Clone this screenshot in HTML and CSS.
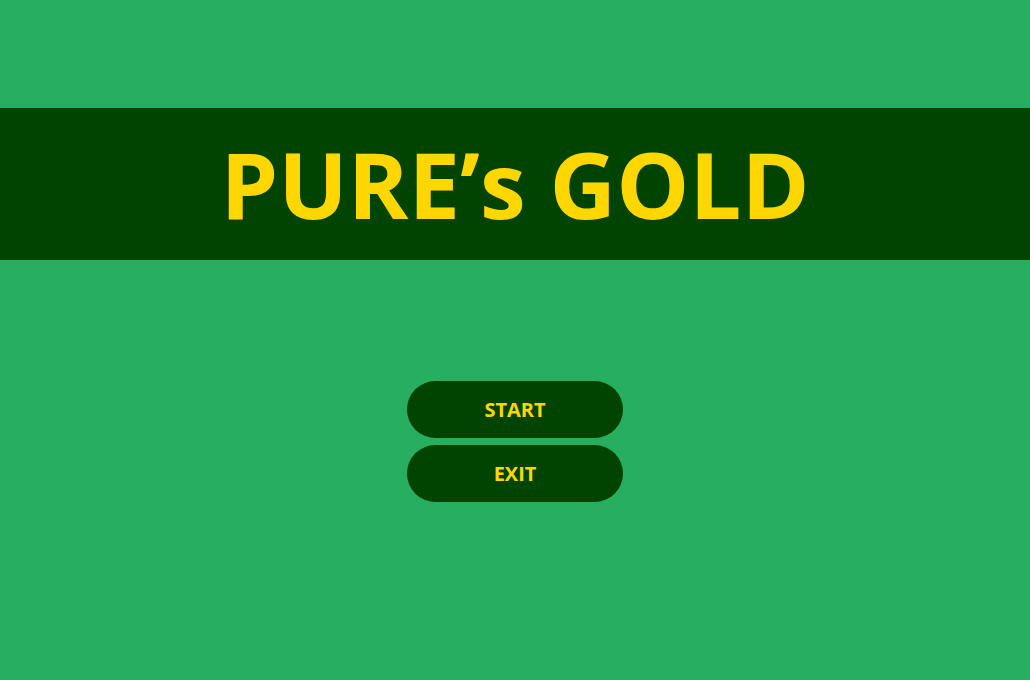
FILE: index.html
```html
<!DOCTYPE html>
<html>
<head>
<meta charset="utf-8">
<link rel="stylesheet" href="styles.css">
</head>
<body>
<div class="page">
  <header class="banner"><h1 class="title">PURE’s GOLD</h1></header>
  <nav class="menu">
    <button class="btn">START</button>
    <button class="btn">EXIT</button>
  </nav>
</div>
</body>
</html>
```
FILE: styles.css
```css
html, body { margin: 0; padding: 0; }
body { background: #27ae60; font-family: "Open Sans", "Noto Sans", sans-serif; }
.page { width: 1030px; height: 680px; display: flex; flex-direction: column; align-items: center; padding-top: 108px; box-sizing: border-box; }
.banner { width: 100%; height: 152px; background: #004400; display: flex; align-items: center; justify-content: center; }
.title { margin: 0; color: #ffd700; font-size: 92px; font-weight: 700; letter-spacing: 0; line-height: 1; padding-bottom: 1px; }
.menu { margin-top: 121px; display: flex; flex-direction: column; gap: 7px; }
.btn { width: 216px; height: 57px; border: 0; border-radius: 29px; background: #004400; color: #ffd700; font-family: "Open Sans", "Noto Sans", sans-serif; font-weight: 700; font-size: 20px; padding: 0; }
```
